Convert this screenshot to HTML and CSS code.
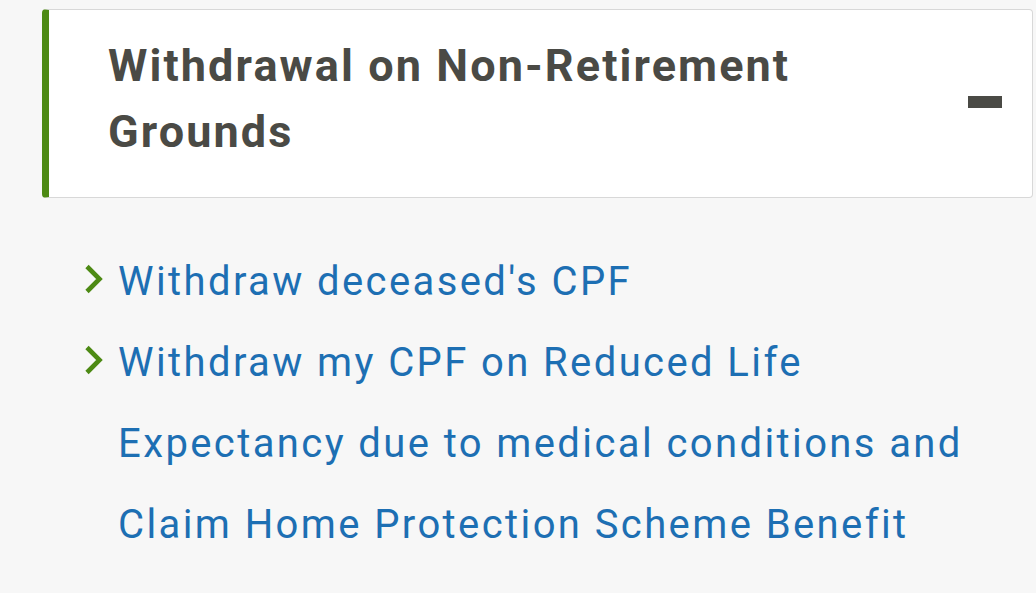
FILE: index.html
```html
<!DOCTYPE html>
<html lang="en">
<head>
    <meta charset="UTF-8">
    <meta name="viewport" content="width=device-width, initial-scale=1.0">
    <title>Withdrawal on Non-Retirement Grounds</title>
    <link rel="stylesheet" href="styles.css">
</head>
<body>
    <div class="accordion">
        <div class="accordion-header">
            <h2 class="accordion-title">Withdrawal on Non-Retirement Grounds</h2>
            <span class="toggle-icon"></span>
        </div>
    </div>

    <ul class="link-list">
        <li>
            <svg class="chevron" viewBox="0 0 19 30" width="19" height="30"><path d="M3 2.5 L15.5 15 L3 27.5" fill="none" stroke="#4d8a14" stroke-width="4.6"/></svg>
            <a href="#">Withdraw deceased's CPF</a>
        </li>
        <li>
            <svg class="chevron" viewBox="0 0 19 30" width="19" height="30"><path d="M3 2.5 L15.5 15 L3 27.5" fill="none" stroke="#4d8a14" stroke-width="4.6"/></svg>
            <a href="#">Withdraw my CPF on Reduced Life Expectancy due to medical conditions and Claim Home Protection Scheme Benefit</a>
        </li>
    </ul>
</body>
</html>
```

FILE: styles.css
```css
body {
    margin: 0;
    background-color: #f7f7f7;
    font-family: Roboto, "Liberation Sans", sans-serif;
}

.accordion {
    margin: 9px 3px 0 42px;
    background-color: #ffffff;
    border: 1px solid #d8d8d8;
    border-left: 7px solid #4d8a14;
    border-radius: 4px;
}

.accordion-header {
    display: flex;
    align-items: center;
    padding: 23px 30px 32px 59px;
}

.accordion-title {
    flex: 1;
    margin: 0 80px 0 0;
    font-size: 45px;
    line-height: 66px;
    font-weight: 700;
    letter-spacing: 2.1px;
    color: #4a4a45;
}

.toggle-icon {
    width: 34px;
    height: 12px;
    margin-top: 6px;
    background-color: #4a4a45;
}

.link-list {
    list-style: none;
    margin: 43px 33px 0 84px;
    padding: 0;
}

.link-list li {
    display: flex;
    align-items: flex-start;
}

.chevron {
    flex-shrink: 0;
    margin-top: 23px;
    margin-right: 15px;
}

.link-list a {
    font-size: 40px;
    line-height: 81px;
    letter-spacing: 2.4px;
    color: #1d6fb3;
    text-decoration: none;
}
```
